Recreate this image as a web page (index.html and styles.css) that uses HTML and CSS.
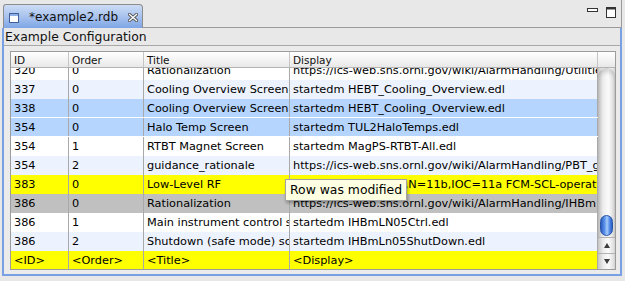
FILE: index.html
```html
<!DOCTYPE html>
<html lang="en">
<head>
    <meta charset="UTF-8">
    <title>example2.rdb</title>
    <link rel="stylesheet" href="styles.css">
</head>
<body>
    <div class="workbench">
        <div class="tabbar">
            <div class="tab">
                <svg class="tab-icon" width="10" height="10" viewBox="0 0 10 10">
                    <rect x="0.5" y="0.5" width="9" height="9" fill="#ffffff" stroke="#3f5f9a"/>
                    <rect x="1" y="1" width="8" height="2" fill="#8fb0e6"/>
                </svg>
                <span class="tab-label">*example2.rdb</span>
                <svg class="tab-close" width="10" height="9" viewBox="0 0 10 9">
                    <path d="M1.5 1.5 L8.5 7.5 M8.5 1.5 L1.5 7.5" stroke="#555555" stroke-width="3.2" stroke-linecap="square"/>
                    <path d="M1.5 1.5 L8.5 7.5 M8.5 1.5 L1.5 7.5" stroke="#ffffff" stroke-width="1.3" stroke-linecap="square"/>
                </svg>
            </div>
            <div class="tabbar-fill">
                <svg width="11" height="4" viewBox="0 0 11 4" class="btn-min">
                    <rect x="0.5" y="0.5" width="10" height="3" fill="#ffffff" stroke="#333333"/>
                </svg>
                <svg width="10" height="11" viewBox="0 0 10 11" class="btn-max">
                    <rect x="0.5" y="0.5" width="9" height="10" fill="#ffffff" stroke="#333333"/>
                    <rect x="0.5" y="0.5" width="9" height="2" fill="#333333"/>
                </svg>
            </div>
        </div>

        <div class="view">
            <div class="view-title">Example Configuration</div>
            <div class="view-body">
                <div class="table">
                    <div class="table-head">
                        <div class="head-cell">ID</div>
                        <div class="head-cell">Order</div>
                        <div class="head-cell">Title</div>
                        <div class="head-cell">Display</div>
                        <div class="head-cell head-filler"></div>
                    </div>
                    <div class="table-main">
                        <div class="rows">
                            <div class="rows-scroll">
                                <div class="row">
                                    <div class="cell">320</div><div class="cell">0</div><div class="cell">Rationalization</div><div class="cell">https://ics-web.sns.ornl.gov/wiki/AlarmHandling/Utilities</div>
                                </div>
                                <div class="row alt">
                                    <div class="cell">337</div><div class="cell">0</div><div class="cell">Cooling Overview Screen</div><div class="cell">startedm HEBT_Cooling_Overview.edl</div>
                                </div>
                                <div class="row selected">
                                    <div class="cell">338</div><div class="cell">0</div><div class="cell">Cooling Overview Screen</div><div class="cell">startedm HEBT_Cooling_Overview.edl</div>
                                </div>
                                <div class="row selected">
                                    <div class="cell">354</div><div class="cell">0</div><div class="cell">Halo Temp Screen</div><div class="cell">startedm TUL2HaloTemps.edl</div>
                                </div>
                                <div class="row">
                                    <div class="cell">354</div><div class="cell">1</div><div class="cell">RTBT Magnet Screen</div><div class="cell">startedm MagPS-RTBT-All.edl</div>
                                </div>
                                <div class="row alt">
                                    <div class="cell">354</div><div class="cell">2</div><div class="cell">guidance_rationale</div><div class="cell">https://ics-web.sns.ornl.gov/wiki/AlarmHandling/PBT_guidance</div>
                                </div>
                                <div class="row modified">
                                    <div class="cell">383</div><div class="cell">0</div><div class="cell">Low-Level RF</div><div class="cell">startedm -m S=SCL,N=11b,IOC=11a FCM-SCL-operator.edl</div>
                                </div>
                                <div class="row deleted">
                                    <div class="cell">386</div><div class="cell">0</div><div class="cell">Rationalization</div><div class="cell">https://ics-web.sns.ornl.gov/wiki/AlarmHandling/IHBm</div>
                                </div>
                                <div class="row">
                                    <div class="cell">386</div><div class="cell">1</div><div class="cell">Main instrument control screen</div><div class="cell">startedm IHBmLN05Ctrl.edl</div>
                                </div>
                                <div class="row alt">
                                    <div class="cell">386</div><div class="cell">2</div><div class="cell">Shutdown (safe mode) screen</div><div class="cell">startedm IHBmLn05ShutDown.edl</div>
                                </div>
                                <div class="row modified">
                                    <div class="cell">&lt;ID&gt;</div><div class="cell">&lt;Order&gt;</div><div class="cell">&lt;Title&gt;</div><div class="cell">&lt;Display&gt;</div>
                                </div>
                            </div>
                        </div>
                        <div class="scrollbar">
                            <div class="track">
                                <div class="thumb"></div>
                            </div>
                            <div class="arrow"><span class="tri-up"></span></div>
                            <div class="arrow"><span class="tri-down"></span></div>
                        </div>
                    </div>
                </div>
            </div>
        </div>

        <div class="tooltip">Row was modified</div>
    </div>
</body>
</html>
```

FILE: styles.css
```css
* {
    box-sizing: border-box;
}

body {
    margin: 0;
    font-family: "DejaVu Sans", "Liberation Sans", sans-serif;
    background-color: #e8e8e8;
}

.workbench {
    position: relative;
    width: 625px;
    height: 281px;
    overflow: hidden;
    display: flex;
    flex-direction: column;
}

/* tab bar */

.tabbar {
    display: flex;
    align-items: flex-end;
    height: 28px;
    padding-left: 3px;
}

.tab {
    display: flex;
    align-items: center;
    width: 140px;
    height: 24px;
    padding: 0 0 0 5px;
    border: 1px solid #8d8d8d;
    border-bottom: none;
    border-radius: 3px 4px 0 0;
    background: linear-gradient(#ccdcf6, #a9c3ee 50%, #7ea5e6);
}

.tab-icon {
    margin-top: 2px;
}

.tab-label {
    margin-left: 10px;
    font-size: 12px;
    color: #111;
}

.tab-close {
    margin-left: 10px;
    margin-top: 1px;
}

.tabbar-fill {
    flex: 1;
    height: 100%;
    margin-right: 3px;
    border-bottom: 1px solid #9a9a9a;
    border-right: 1px solid #9a9a9a;
    display: flex;
    justify-content: flex-end;
    align-items: flex-start;
    padding: 7px 5px 0 0;
}

.btn-min {
    margin-top: 1px;
    margin-right: 8px;
}

/* view */

.view {
    height: 248px;
    margin: 0 3px 0 2px;
    border: 2px solid #77a1e4;
    border-top: none;
    display: flex;
    flex-direction: column;
}

.view-title {
    height: 18px;
    padding-left: 1px;
    font-size: 12.4px;
    line-height: 17px;
    color: #111;
    border-bottom: 1px solid #a8a8a8;
}

.view-body {
    flex: 1;
    padding: 5px 4px 3px 6px;
    background-color: #ebebeb;
}

.table {
    height: 219px;
    border: 1px solid #9c9c9c;
    background: #ffffff;
    display: flex;
    flex-direction: column;
}

.table-head {
    display: grid;
    grid-template-columns: 58px 75px 146px 308px 17px;
    height: 16px;
    border-bottom: 1px solid #b4b4b4;
    background: linear-gradient(#ffffff, #f4f4f4 50%, #e8e8e8);
}

.head-cell {
    border-right: 1px solid #c6c6c6;
    padding: 3px 0 0 3px;
    font-size: 10.5px;
    line-height: 11px;
    color: #111;
}

.head-filler {
    border-right: none;
}

.table-main {
    flex: 1;
    display: flex;
    overflow: hidden;
}

.rows {
    width: 587px;
    height: 201px;
    overflow: hidden;
}

.rows-scroll {
    margin-top: -7px;
}

.row {
    display: grid;
    grid-template-columns: 58px 75px 146px 308px;
    height: 19px;
    background: #ffffff;
}

.row.alt {
    background: #edf3fe;
}

.row.selected {
    background: #b5d5ff;
    border-bottom: 1px solid #ffffff;
}

.row.modified {
    background: #ffff00;
}

.row.deleted {
    background: #c0c0c0;
}

.cell {
    border-right: 1px solid #a9a9a9;
    padding-left: 3px;
    font-size: 11.3px;
    line-height: 19px;
    color: #000;
    white-space: nowrap;
    overflow: hidden;
}

/* aqua scrollbar */

.scrollbar {
    width: 17px;
    display: flex;
    flex-direction: column;
    background: linear-gradient(to right, #c4c4c4, #ececec 30%, #fbfbfb 60%, #e2e2e2 90%, #cfcfcf);
}

.track {
    flex: 1;
    display: flex;
    flex-direction: column;
    justify-content: flex-end;
    border-top: 1px solid #d0d0d0;
    border-radius: 8px 8px 0 0;
    box-shadow: inset 0 3px 4px rgba(0, 0, 0, 0.15);
}

.thumb {
    width: 13px;
    height: 21px;
    margin: 0 0 1px 2px;
    border: 1px solid #2a55a6;
    border-radius: 7px;
    background: linear-gradient(to right, #2a5cc0, #5f97ee 35%, #a8ccfb 55%, #4d86e4 80%, #2c5fc4);
}

.arrow {
    height: 16px;
    border-top: 1px solid #b3b3b3;
    display: flex;
    justify-content: center;
    align-items: center;
}

.tri-up {
    width: 0;
    height: 0;
    border-left: 3.5px solid transparent;
    border-right: 3.5px solid transparent;
    border-bottom: 5px solid #3c3c3c;
}

.tri-down {
    width: 0;
    height: 0;
    border-left: 3.5px solid transparent;
    border-right: 3.5px solid transparent;
    border-top: 5px solid #3c3c3c;
}

/* tooltip over the modified row */

.tooltip {
    position: absolute;
    left: 285px;
    top: 179px;
    width: 122px;
    height: 22px;
    padding-left: 4px;
    border: 1px solid #a3a3a3;
    background: #ffffe1;
    font-size: 12.4px;
    line-height: 20px;
    color: #000;
    box-shadow: 1px 2px 3px rgba(0, 0, 0, 0.3);
}
```
